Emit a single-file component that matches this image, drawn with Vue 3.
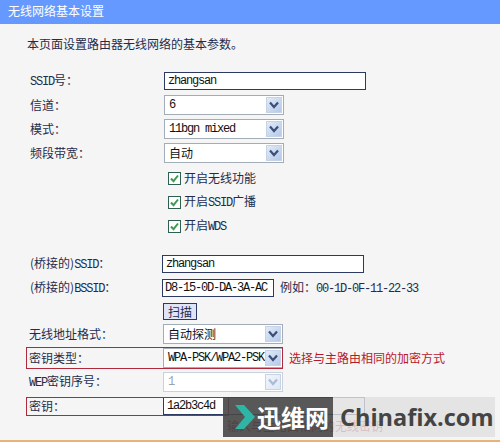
<template>
  <div class="page">
    <div class="title-bar">无线网络基本设置</div>
    <div class="content">
      <p class="intro">本页面设置路由器无线网络的基本参数。</p>

      <div class="row">
        <div class="label"><span class="en">SSID</span>号：</div>
        <div class="field wide en">zhangsan</div>
      </div>
      <div class="row" v-for="item in topSelects" :key="item.label">
        <div class="label">{{ item.label }}：</div>
        <div class="select">
          <span class="select-val" :class="item.cls">{{ item.value }}</span>
          <span class="arrow">
            <svg width="10" height="8" viewBox="0 0 10 8"><path d="M1 1.5 L5 6 L9 1.5" fill="none" stroke="#3d4f78" stroke-width="2.2" /></svg>
          </span>
        </div>
      </div>

      <div class="checks">
        <div class="check-row" v-for="c in checks" :key="c.en + c.text">
          <span class="checkbox">
            <svg width="11" height="11" viewBox="0 0 11 11"><path d="M2 5.5 L4.5 8.2 L9 2.5" fill="none" stroke="#3f9a52" stroke-width="2" /></svg>
          </span>
          <span>开启<span class="en" v-if="c.en">{{ c.en }}</span>{{ c.text }}</span>
        </div>
      </div>

      <div class="row shifted">
        <div class="label bridged">(桥接的)<span class="en">SSID</span>：</div>
        <div class="field wide en">zhangsan</div>
      </div>
      <div class="row shifted">
        <div class="label bridged">(桥接的)<span class="en">BSSID</span>：</div>
        <div class="field bssid en">D8-15-0D-DA-3A-AC</div>
        <span class="hint">例如：<span class="en">00-1D-0F-11-22-33</span></span>
      </div>
      <div class="row shifted scan-row">
        <div class="label"></div>
        <button class="scan">扫描</button>
      </div>
      <div class="row shifted">
        <div class="label">无线地址格式：</div>
        <div class="select">
          <span class="select-val">自动探测</span>
          <span class="arrow">
            <svg width="10" height="8" viewBox="0 0 10 8"><path d="M1 1.5 L5 6 L9 1.5" fill="none" stroke="#3d4f78" stroke-width="2.2" /></svg>
          </span>
        </div>
      </div>
      <div class="row shifted">
        <div class="label">密钥类型：</div>
        <div class="select">
          <span class="select-val en">WPA-PSK/WPA2-PSK</span>
          <span class="arrow">
            <svg width="10" height="8" viewBox="0 0 10 8"><path d="M1 1.5 L5 6 L9 1.5" fill="none" stroke="#3d4f78" stroke-width="2.2" /></svg>
          </span>
        </div>
        <span class="red-note">选择与主路由相同的加密方式</span>
        <div class="red-box type-box"></div>
      </div>
      <div class="row shifted">
        <div class="label"><span class="en">WEP</span>密钥序号：</div>
        <div class="select disabled">
          <span class="select-val en">1</span>
          <span class="arrow">
            <svg width="10" height="8" viewBox="0 0 10 8"><path d="M1 1.5 L5 6 L9 1.5" fill="none" stroke="#a9bbd6" stroke-width="2.2" /></svg>
          </span>
        </div>
      </div>
      <div class="row shifted">
        <div class="label">密钥：</div>
        <div class="field wide en">1a2b3c4d</div>
        <div class="red-box key-box"></div>
      </div>
      <div class="key-note">输入与主路由相同的无线密钥</div>
    </div>

    <div class="watermark">
      <div class="wm-dark">
        <svg class="wm-arrow" width="22" height="26" viewBox="0 0 22 26"><path d="M1 1 H10 L21 13 L10 25 H1 L11 13 Z" fill="#2fb5a5" /></svg>
        <span class="wm-cn">迅维网</span>
      </div>
      <div class="wm-light">Chinafix.com</div>
    </div>
  </div>
</template>

<script setup>
const topSelects = [
  { label: '信道', value: '6', cls: 'en' },
  { label: '模式', value: '11bgn mixed', cls: 'en' },
  { label: '频段带宽', value: '自动', cls: '' }
]

const checks = [
  { en: '', text: '无线功能' },
  { en: 'SSID', text: '广播' },
  { en: 'WDS', text: '' }
]
</script>

<style scoped>
.page {
  position: relative;
  width: 500px;
  height: 442px;
  overflow: hidden;
  background-color: #f5f5f5;
  color: #1f2c4c;
  font-family: "Noto Sans CJK SC", sans-serif;
  font-size: 12px;
  line-height: 16px;
}

.title-bar {
  height: 24px;
  padding-left: 8px;
  background-color: #6699ff;
  color: #fff;
  line-height: 22px;
}

.content {
  box-sizing: border-box;
  height: 418px;
  padding: 12px 0 0 30px;
  border-bottom: 2px solid #e8b27a;
}

.intro {
  margin: 0 0 17px -3px;
  line-height: 16px;
}

.en {
  font-family: "Liberation Mono", monospace;
  font-size: 12px;
  letter-spacing: -1.2px;
}

.row {
  position: relative;
  display: flex;
  align-items: center;
  height: 24px;
}

.label {
  width: 134px;
  flex-shrink: 0;
}

.bridged {
  margin-left: 1px;
  width: 132px;
}

.field {
  box-sizing: border-box;
  height: 18px;
  padding-left: 3px;
  background-color: #fff;
  border: 1px solid #2c3a62;
  line-height: 16px;
  color: #111;
}

.wide {
  width: 202px;
}

.bssid {
  width: 112px;
  padding-left: 2px;
}

.hint {
  margin-left: 6px;
}

.select {
  box-sizing: border-box;
  display: flex;
  align-items: center;
  justify-content: space-between;
  width: 120px;
  height: 20px;
  padding: 1px;
  background-color: #fff;
  border: 1px solid #a3adb8;
  color: #111;
}

.select-val {
  padding-left: 3px;
  white-space: nowrap;
}

.arrow {
  display: flex;
  align-items: center;
  justify-content: center;
  flex-shrink: 0;
  width: 16px;
  height: 16px;
  background: linear-gradient(135deg, #e2ebf8, #b4c9e8);
  border: 1px solid #c6d3e6;
  box-sizing: border-box;
}

.disabled {
  border-color: #c9d2dc;
  color: #9aa3ad;
}

.disabled .arrow {
  background: linear-gradient(135deg, #f2f6fb, #dde7f4);
}

.checks {
  padding: 1px 0 0 138px;
}

.check-row {
  display: flex;
  align-items: center;
  gap: 3px;
  height: 24px;
}

.checkbox {
  box-sizing: border-box;
  display: flex;
  align-items: center;
  justify-content: center;
  width: 13px;
  height: 13px;
  background-color: #fff;
  border: 1px solid #2f5f50;
}

.shifted {
  left: -1px;
}

.checks + .shifted {
  margin-top: 14px;
}

.scan-row {
  height: 22px;
}

.scan {
  box-sizing: border-box;
  width: 34px;
  height: 17px;
  padding: 0;
  background-color: #dfe5f7;
  border: 1px solid #2c3a62;
  font-family: inherit;
  font-size: 12px;
  line-height: 15px;
  color: #1f2c4c;
}

.red-note {
  margin-left: 6px;
  color: #b8182a;
}

.red-box {
  position: absolute;
  left: -3px;
  box-sizing: border-box;
  border: 1px solid #b0283c;
  pointer-events: none;
}

.type-box {
  top: 1px;
  width: 257px;
  height: 22px;
}

.key-box {
  top: 3px;
  width: 203px;
  height: 19px;
}

.key-note {
  margin: 0 0 0 197px;
  color: #b8182a;
  white-space: nowrap;
}

.watermark {
  position: absolute;
  left: 223px;
  top: 397px;
  display: flex;
  height: 40px;
}

.wm-dark {
  display: flex;
  align-items: center;
  gap: 1px;
  width: 110px;
  padding-left: 11px;
  box-sizing: border-box;
  background-color: rgba(70, 70, 70, 0.9);
}

.wm-cn {
  color: #fff;
  font-size: 24px;
  font-weight: 700;
  line-height: 30px;
  white-space: nowrap;
}

.wm-light {
  box-sizing: border-box;
  width: 162px;
  padding-left: 7px;
  background-color: rgba(225, 225, 225, 0.82);
  color: #444;
  font-family: "Open Sans", sans-serif;
  font-size: 23.5px;
  font-weight: 700;
  line-height: 40px;
  white-space: nowrap;
}
</style>

<style>
html, body {
  margin: 0;
}
</style>
